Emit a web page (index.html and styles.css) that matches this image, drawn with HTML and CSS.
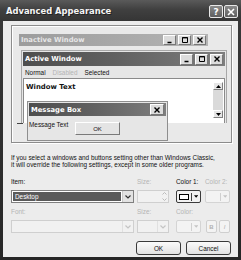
FILE: index.html
```html
<!DOCTYPE html>
<html>
<head>
<meta charset="utf-8">
<link rel="stylesheet" href="styles.css">
</head>
<body>
<div class="win">
  <div class="titlebar">
    <span class="title">Advanced Appearance</span>
    <span class="capbtns">
      <span class="tbtn">?</span>
      <span class="tbtn"><svg width="8" height="8" viewBox="0 0 8 8"><path d="M1 1L7 7M7 1L1 7" stroke="#fff" stroke-width="1.6"/></svg></span>
    </span>
  </div>
  <div class="body">
    <div class="preview">
      <div class="pwin inactive">
        <div class="cap cap-inactive">
          <span class="cap-title">Inactive Window</span>
          <span class="cbtns">
            <span class="cbtn"><svg width="8" height="8" viewBox="0 0 8 8"><path d="M1.5 6.5H5.5" stroke="#000" stroke-width="1.5"/></svg></span>
            <span class="cbtn"><svg width="8" height="8" viewBox="0 0 8 8"><path d="M1.5 1.5H6.5V6.5H1.5Z" fill="none" stroke="#000" stroke-width="1"/><path d="M1.5 1.8H6.5" stroke="#000" stroke-width="1.2"/></svg></span>
            <span class="cbtn"><svg width="8" height="8" viewBox="0 0 8 8"><path d="M1.5 1.5L6.5 6.5M6.5 1.5L1.5 6.5" stroke="#000" stroke-width="1.4"/></svg></span>
          </span>
        </div>
      </div>
      <div class="pwin active">
        <div class="cap cap-active">
          <span class="cap-title">Active Window</span>
          <span class="cbtns">
            <span class="cbtn"><svg width="8" height="8" viewBox="0 0 8 8"><path d="M1.5 6.5H5.5" stroke="#000" stroke-width="1.5"/></svg></span>
            <span class="cbtn"><svg width="8" height="8" viewBox="0 0 8 8"><path d="M1.5 1.5H6.5V6.5H1.5Z" fill="none" stroke="#000" stroke-width="1"/><path d="M1.5 1.8H6.5" stroke="#000" stroke-width="1.2"/></svg></span>
            <span class="cbtn"><svg width="8" height="8" viewBox="0 0 8 8"><path d="M1.5 1.5L6.5 6.5M6.5 1.5L1.5 6.5" stroke="#000" stroke-width="1.4"/></svg></span>
          </span>
        </div>
        <div class="menu">
          <span>Normal</span><span class="dis">Disabled</span><span>Selected</span>
        </div>
        <div class="textbox">
          <div class="wtext">Window Text</div>
          <div class="scroll">
            <span class="sbtn"><svg width="5" height="3" viewBox="0 0 5 3"><path d="M0 3L2.5 0L5 3Z" fill="#000"/></svg></span>
            <span class="sbtn"><svg width="5" height="3" viewBox="0 0 5 3"><path d="M0 0L2.5 3L5 0Z" fill="#000"/></svg></span>
          </div>
        </div>
      </div>
      <div class="pwin msgbox">
        <div class="cap cap-active">
          <span class="cap-title">Message Box</span>
          <span class="cbtns">
            <span class="cbtn wide"><svg width="8" height="8" viewBox="0 0 8 8"><path d="M1.5 1.5L6.5 6.5M6.5 1.5L1.5 6.5" stroke="#000" stroke-width="1.4"/></svg></span>
          </span>
        </div>
        <div class="msgbody">
          <span class="msgtext">Message Text</span>
          <span class="okbtn">OK</span>
        </div>
      </div>
      <span class="tick"></span>
    </div>

    <p class="note">If you select a windows and buttons setting other than Windows Classic,<br>it will override the following settings, except in some older programs.</p>

    <div class="form">
      <span class="lbl">Item:</span>
      <span class="lbl dis">Size:</span>
      <span class="lbl">Color 1:</span>
      <span class="lbl dis">Color 2:</span>

      <div class="combo wide item">
        <span class="field"><span class="sel">Desktop</span></span>
        <span class="arrow"><svg width="6" height="4" viewBox="0 0 6 4"><path d="M0.5 0.5L3 3L5.5 0.5" fill="none" stroke="#333" stroke-width="1.2"/></svg></span>
      </div>
      <div class="combo narrow disabled">
        <span class="field"></span>
        <span class="spinbtns">
          <svg width="5" height="3" viewBox="0 0 5 3"><path d="M0.5 2.5L2.5 0.5L4.5 2.5" fill="none" stroke="#bbb" stroke-width="1"/></svg>
          <svg width="5" height="3" viewBox="0 0 5 3"><path d="M0.5 0.5L2.5 2.5L4.5 0.5" fill="none" stroke="#bbb" stroke-width="1"/></svg>
        </span>
      </div>
      <div class="colorbtn">
        <span class="swatch"></span>
        <span class="cdiv"></span>
        <svg width="5" height="3" viewBox="0 0 5 3"><path d="M0 0L2.5 3L5 0Z" fill="#000"/></svg>
      </div>
      <div class="colorbtn disabled">
        <span class="swatch none"></span>
        <span class="cdiv"></span>
        <svg width="5" height="3" viewBox="0 0 5 3"><path d="M0 0L2.5 3L5 0Z" fill="#c4c4c4"/></svg>
      </div>

      <span class="lbl dis row3">Font:</span>
      <span class="lbl dis row3">Size:</span>
      <span class="lbl dis row3">Color:</span>
      <span class="lbl row3"></span>

      <div class="combo wide disabled">
        <span class="field"></span>
        <span class="arrow"><svg width="6" height="4" viewBox="0 0 6 4"><path d="M0.5 0.5L3 3L5.5 0.5" fill="none" stroke="#c4c4c4" stroke-width="1.2"/></svg></span>
      </div>
      <div class="combo narrow disabled">
        <span class="field"></span>
        <span class="arrow"><svg width="6" height="4" viewBox="0 0 6 4"><path d="M0.5 0.5L3 3L5.5 0.5" fill="none" stroke="#c4c4c4" stroke-width="1.2"/></svg></span>
      </div>
      <div class="colorbtn disabled">
        <span class="swatch none"></span>
        <span class="cdiv"></span>
        <svg width="5" height="3" viewBox="0 0 5 3"><path d="M0 0L2.5 3L5 0Z" fill="#c4c4c4"/></svg>
      </div>
      <div class="bi">
        <span class="fbtn b">B</span>
        <span class="fbtn i">I</span>
      </div>
    </div>

    <div class="actions">
      <span class="btn">OK</span>
      <span class="btn">Cancel</span>
    </div>
  </div>
</div>
</body>
</html>
```

FILE: styles.css
```css
html, body {
  margin: 0;
  padding: 0;
  background: #1e1e1e;
}
.win {
  width: 241px;
  height: 260px;
  box-sizing: border-box;
  padding: 0 3px 3px 3px;
  background: linear-gradient(#3a3a3a, #262626);
  display: flex;
  flex-direction: column;
  font-family: "Liberation Sans", Arial, sans-serif;
  font-size: 6.4px;
  color: #111;
}
.titlebar {
  height: 21px;
  flex: none;
  display: flex;
  align-items: center;
  justify-content: space-between;
  padding: 0 3px 0 3px;
  background: linear-gradient(#5a5a5a 0%, #404040 45%, #353535 100%);
  margin: 0 -3px;
}
.title {
  color: #f4f4f4;
  font-family: "DejaVu Sans", sans-serif;
  font-weight: bold;
  font-size: 8.4px;
  padding-left: 3px;
  text-shadow: 1px 1px 0 #222;
}
.capbtns {
  display: flex;
  gap: 1px;
  margin-top: 2px;
}
.tbtn {
  width: 14px;
  height: 13px;
  box-sizing: border-box;
  border: 1px solid #e8e8e8;
  border-radius: 2px;
  background: linear-gradient(#8a8a8a, #5e5e5e);
  color: #fff;
  font-family: "DejaVu Sans", sans-serif;
  font-weight: bold;
  font-size: 9px;
  line-height: 10px;
  display: flex;
  align-items: center;
  justify-content: center;
}
.body {
  flex: 1;
  background: #ececec;
  padding: 4px 6px 0 8px;
  display: flex;
  flex-direction: column;
}
.preview {
  position: relative;
  height: 118px;
  flex: none;
  box-sizing: border-box;
  border: 1px solid #8c8c8c;
  box-shadow: inset 1px 1px 0 #fff, 1px 1px 0 #fff;
  background: #e9e9e9;
}
.pwin {
  position: absolute;
  box-sizing: border-box;
}
.cap {
  display: flex;
  align-items: center;
  justify-content: space-between;
  box-sizing: border-box;
  padding: 0 2px 0 2px;
}
.cap-title {
  font-family: "DejaVu Sans", sans-serif;
  font-weight: bold;
  font-size: 6.8px;
  color: #fff;
}
.cap-inactive {
  height: 12px;
  background: linear-gradient(90deg, #9c9c9c, #b4b4b4);
}
.cap-inactive .cap-title {
  color: #e6e6e6;
}
.cap-active {
  height: 14px;
  background: linear-gradient(90deg, #4e4e4e 0%, #606060 45%, #7e7e7e 100%);
}
.cbtns {
  display: flex;
  gap: 2px;
}
.cbtn {
  width: 13px;
  height: 11px;
  box-sizing: border-box;
  background: #dcdcdc;
  border: 1px solid;
  border-color: #fff #777 #777 #fff;
  display: flex;
  align-items: center;
  justify-content: center;
}
.cap-inactive .cbtn {
  height: 10px;
}
.cbtn.wide {
  width: 14px;
  height: 11px;
}
.inactive {
  left: 7px;
  top: 8px;
  width: 189px;
}
.active {
  left: 9px;
  top: 24px;
  width: 206px;
  height: 73px;
  background: #e6e6e6;
  border: 1px solid #a8a8a8;
  border-bottom: none;
  padding: 1px 1px 0 1px;
  display: flex;
  flex-direction: column;
}
.menu {
  height: 12px;
  display: flex;
  align-items: center;
  gap: 7px;
  padding-left: 2px;
}
.menu .dis, .lbl.dis {
  color: #b4b4b4;
}
.textbox {
  flex: 1;
  background: #fff;
  border: 1px solid #8a8a8a;
  border-bottom: none;
  display: flex;
  justify-content: space-between;
}
.wtext {
  font-family: "DejaVu Sans", sans-serif;
  font-weight: bold;
  font-size: 6.9px;
  padding: 4px 0 0 2px;
}
.scroll {
  width: 10px;
  margin: 3px 1px 0 0;
  background: #dadada;
  display: flex;
  flex-direction: column;
  justify-content: space-between;
  height: 36px;
}
.sbtn {
  width: 10px;
  height: 8px;
  box-sizing: border-box;
  background: #e6e6e6;
  border: 1px solid;
  border-color: #fff #808080 #808080 #fff;
  display: flex;
  align-items: center;
  justify-content: center;
}
.msgbox {
  left: 15px;
  top: 75px;
  width: 141px;
  height: 40px;
  background: #e6e6e6;
  border: 1px solid #8e8e8e;
  padding: 1px;
  display: flex;
  flex-direction: column;
}
.msgbox .cap-active {
  height: 13px;
}
.msgbody {
  flex: 1;
  position: relative;
}
.msgtext {
  position: absolute;
  left: 0;
  top: 5px;
}
.okbtn {
  position: absolute;
  left: 46px;
  top: 6px;
  width: 45px;
  height: 13px;
  box-sizing: border-box;
  border: 1px solid;
  border-color: #fff #7a7a7a #7a7a7a #fff;
  background: #e4e4e4;
  display: flex;
  align-items: center;
  justify-content: center;
  font-size: 6px;
}
.tick {
  position: absolute;
  left: 5px;
  top: 97px;
  width: 6px;
  height: 1px;
  background: #444;
}
.note {
  margin: 11px 0 0 0;
  line-height: 7px;
  color: #111;
}
.form {
  margin-top: 10px;
  display: grid;
  grid-template-columns: 126px 39px 29px 26px;
  grid-template-rows: 11px 14px 16px 14px;
  align-items: start;
}
.lbl {
  line-height: 8px;
}
.lbl.row3 {
  margin-top: 5px;
}
.form > .combo, .form > .colorbtn, .form > .bi {
  margin-top: 1px;
}
.combo {
  height: 13px;
  box-sizing: border-box;
  border: 1px solid #7f7f7f;
  background: #fff;
  display: flex;
  align-items: stretch;
}
.combo.wide {
  width: 123px;
}
.combo.narrow {
  width: 32px;
}
.combo.disabled {
  border-color: #cfcfcf;
  background: #f1f1f1;
}
.field {
  flex: 1;
  padding: 1px;
  display: flex;
}
.sel {
  flex: 1;
  background: #5a5a5a;
  color: #fff;
  padding-left: 2px;
  line-height: 9px;
}
.arrow {
  width: 10px;
  display: flex;
  align-items: center;
  justify-content: center;
  background: #e2e2e2;
  border-left: 1px solid #c8c8c8;
}
.combo.disabled .arrow {
  background: #f1f1f1;
  border-left-color: #e0e0e0;
}
.spinbtns {
  width: 8px;
  display: flex;
  flex-direction: column;
  align-items: center;
  justify-content: space-around;
}
.colorbtn {
  width: 25px;
  height: 13px;
  box-sizing: border-box;
  border: 1px solid #3c3c3c;
  border-radius: 2px;
  background: #f2f2f2;
  display: flex;
  align-items: center;
  padding: 0 2px 0 2px;
  gap: 2px;
}
.colorbtn.disabled {
  border-color: #d4d4d4;
  background: #f3f3f3;
}
.swatch {
  width: 11px;
  height: 6px;
  box-sizing: border-box;
  border: 1px solid #000;
  background: #fff;
}
.swatch.none {
  border: none;
  background: transparent;
}
.cdiv {
  width: 1px;
  height: 8px;
  background: #444;
}
.colorbtn.disabled .cdiv {
  background: #d0d0d0;
}
.bi {
  display: flex;
  gap: 2px;
  padding-left: 1px;
}
.fbtn {
  width: 11px;
  height: 13px;
  box-sizing: border-box;
  border: 1px solid #cfcfcf;
  border-radius: 2px;
  background: #f3f3f3;
  color: #b0b0b0;
  font-size: 6px;
  display: flex;
  align-items: center;
  justify-content: center;
}
.fbtn.b {
  font-weight: bold;
}
.fbtn.i {
  font-style: italic;
}
.actions {
  margin-top: 8px;
  display: flex;
  justify-content: flex-end;
  gap: 5px;
  padding-right: 1px;
}
.btn {
  width: 45px;
  height: 14px;
  box-sizing: border-box;
  border: 1px solid #3a3a3a;
  border-radius: 3px;
  background: linear-gradient(#fbfbfb, #e2e2e2);
  display: flex;
  align-items: center;
  justify-content: center;
}
```
